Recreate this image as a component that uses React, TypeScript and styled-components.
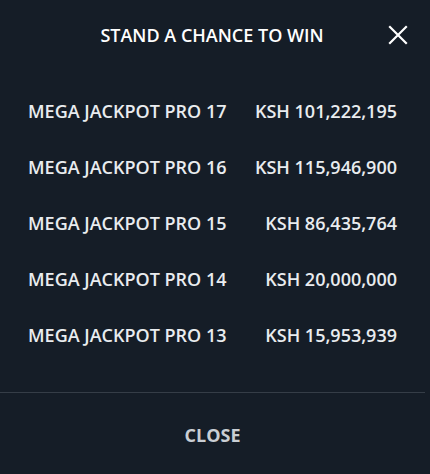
import styled, { createGlobalStyle } from "styled-components";

const GlobalStyle = createGlobalStyle`
  html, body {
    margin: 0;
    padding: 0;
    background: #151d27;
  }
  * {
    box-sizing: border-box;
  }
`;

const Modal = styled.div`
  width: 430px;
  height: 474px;
  background: #151d27;
  font-family: "Open Sans", "Liberation Sans", sans-serif;
  display: flex;
  flex-direction: column;
`;

const Header = styled.div`
  height: 70px;
  padding-right: 6px;
  display: flex;
  align-items: center;
  justify-content: center;
  position: relative;
`;

const Title = styled.h2`
  margin: 0;
  color: #ffffff;
  font-size: 18px;
  font-weight: 600;
`;

const CloseIcon = styled.button`
  position: absolute;
  right: 21px;
  top: 24px;
  width: 22px;
  height: 22px;
  padding: 0;
  border: none;
  background: transparent;
  display: flex;
  align-items: center;
  justify-content: center;
  cursor: pointer;
`;

const List = styled.div`
  padding: 13px 33px 29px 28px;
  display: flex;
  flex-direction: column;
`;

const Row = styled.div`
  height: 56px;
  display: flex;
  align-items: center;
  justify-content: space-between;
  color: #e9ecef;
  font-size: 18px;
  font-weight: 600;
`;

const Divider = styled.hr`
  margin: 0 5px 0 0;
  border: none;
  border-top: 1px solid #353d47;
`;

const Footer = styled.div`
  flex: 1;
  display: flex;
  align-items: center;
  justify-content: center;
  padding: 3px 5px 0 0;
`;

const CloseButton = styled.button`
  border: none;
  background: transparent;
  color: #c9ced3;
  font-family: inherit;
  font-size: 18px;
  font-weight: 700;
  cursor: pointer;
`;

const jackpots = [
  { name: "MEGA JACKPOT PRO 17", amount: "KSH 101,222,195" },
  { name: "MEGA JACKPOT PRO 16", amount: "KSH 115,946,900" },
  { name: "MEGA JACKPOT PRO 15", amount: "KSH 86,435,764" },
  { name: "MEGA JACKPOT PRO 14", amount: "KSH 20,000,000" },
  { name: "MEGA JACKPOT PRO 13", amount: "KSH 15,953,939" },
];

const App = () => {
  return (
    <>
      <GlobalStyle />
      <Modal>
        <Header>
          <Title>STAND A CHANCE TO WIN</Title>
          <CloseIcon aria-label='close'>
            <svg width='20' height='20' viewBox='0 0 20 20'>
              <path
                d='M2 2 L18 18 M18 2 L2 18'
                stroke='#ffffff'
                strokeWidth='2.2'
                strokeLinecap='square'
              />
            </svg>
          </CloseIcon>
        </Header>
        <List>
          {jackpots.map((item) => (
            <Row key={item.name}>
              <span>{item.name}</span>
              <span>{item.amount}</span>
            </Row>
          ))}
        </List>
        <Divider />
        <Footer>
          <CloseButton>CLOSE</CloseButton>
        </Footer>
      </Modal>
    </>
  );
};

export default App;
